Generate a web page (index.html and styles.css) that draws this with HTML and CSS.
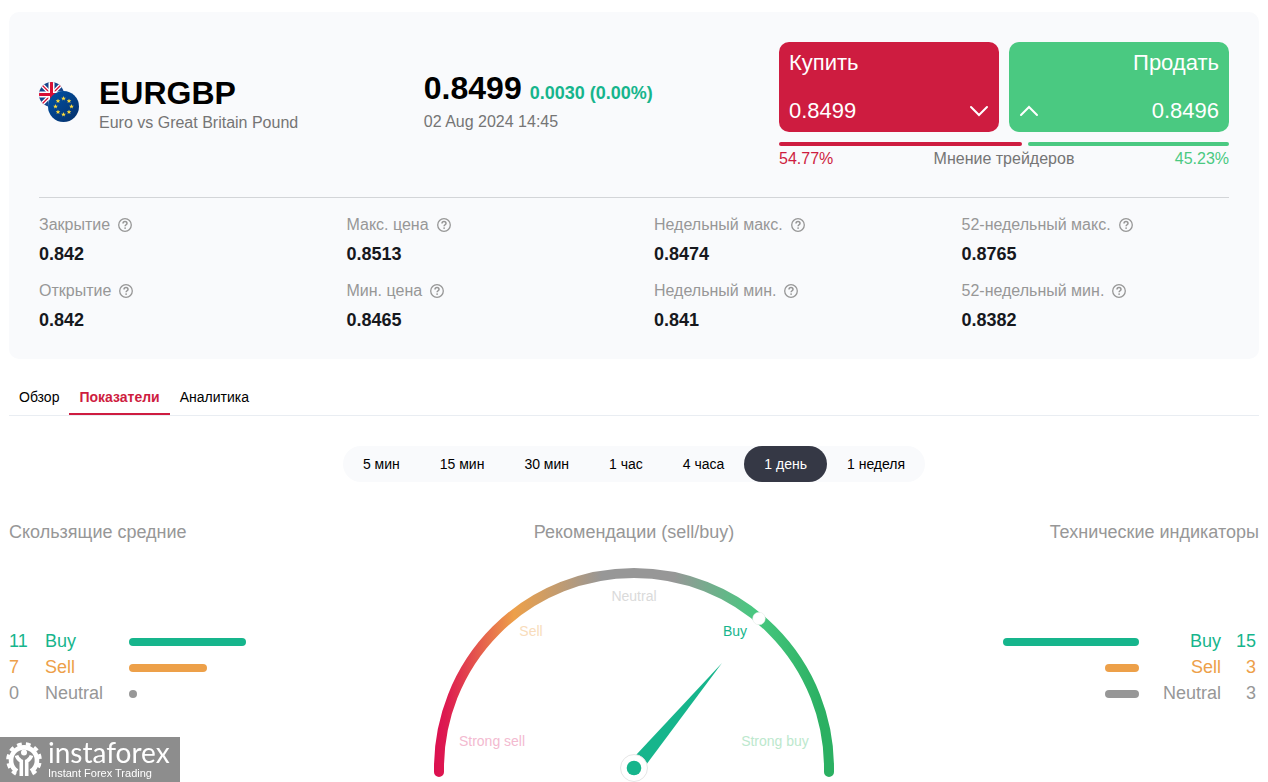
FILE: index.html
```html
<!DOCTYPE html>
<html lang="ru">
<head>
<meta charset="utf-8">
<meta name="viewport" content="width=device-width, initial-scale=1">
<title>EURGBP</title>
<link rel="stylesheet" href="styles.css">
</head>
<body>
<svg class="defs" aria-hidden="true">
  <symbol id="help" viewBox="0 0 14 14">
    <circle cx="7" cy="7" r="6.3" fill="none" stroke="currentColor" stroke-width="1.3"/>
    <path d="M5 5.6C5 4.3 5.8 3.6 7 3.6s2 .7 2 1.8c0 1.3-1.9 1.5-1.9 2.9" fill="none" stroke="currentColor" stroke-width="1.5"/>
    <circle cx="7.1" cy="10.1" r=".9" fill="currentColor"/>
  </symbol>
  <symbol id="star" viewBox="-2 -2 4 4">
    <path d="M0-2 .5-.6 1.9-.6.8.3 1.2 1.6 0 .8-1.2 1.6-.8.3-1.9-.6-.5-.6z" fill="#ffdc3c"/>
  </symbol>
</svg>
<main class="page">
  <section class="card">
    <header class="summary">
      <div class="pair">
        <svg class="flags" viewBox="0 0 40 40" aria-hidden="true">
          <defs>
            <clipPath id="gb"><circle cx="12.5" cy="12.5" r="12.5"/></clipPath>
            <linearGradient id="eu" x1="0" y1="0" x2="1" y2="1"><stop offset="0" stop-color="#0053a8"/><stop offset="1" stop-color="#062f68"/></linearGradient>
          </defs>
          <g clip-path="url(#gb)">
            <path fill="#16458c" d="M0 0h25v25H0z"/>
            <path d="M1 1l23 23M24 1L1 24" stroke="#fff" stroke-width="4"/>
            <path d="M1 1l23 23M24 1L1 24" stroke="#d80f35" stroke-width="1.3"/>
            <path d="M12.5 0v25M0 12.5h25" stroke="#fff" stroke-width="6"/>
            <path d="M12.5 0v25M0 12.5h25" stroke="#d80f35" stroke-width="3"/>
          </g>
          <circle cx="24.5" cy="24.5" r="15.5" fill="url(#eu)"/>
          <use href="#star" x="22" y="14" width="5" height="5"/>
          <use href="#star" x="27.500" y="16.500" width="5" height="5"/>
          <use href="#star" x="30" y="22" width="5" height="5"/>
          <use href="#star" x="27.500" y="27.500" width="5" height="5"/>
          <use href="#star" x="22" y="30" width="5" height="5"/>
          <use href="#star" x="16.500" y="27.500" width="5" height="5"/>
          <use href="#star" x="14" y="22" width="5" height="5"/>
          <use href="#star" x="16.500" y="16.500" width="5" height="5"/>
        </svg>
        <div>
          <h1 class="pair-name">EURGBP</h1>
          <p class="note">Euro vs Great Britain Pound</p>
        </div>
      </div>
      <div class="quote">
        <p class="quote-row"><strong class="price">0.8499</strong><strong class="change">0.0030 (0.00%)</strong></p>
        <p class="note">02 Aug 2024 14:45</p>
      </div>
      <div class="trade">
        <div class="trade-buttons">
          <button class="deal deal-buy" type="button">
            <span>Купить</span>
            <span class="deal-row"><span>0.8499</span>
              <svg class="chevron" viewBox="0 0 20 12" aria-hidden="true"><path d="M2 2l8 8 8-8"/></svg></span>
          </button>
          <button class="deal deal-sell" type="button">
            <span>Продать</span>
            <span class="deal-row"><svg class="chevron" viewBox="0 0 20 12" aria-hidden="true"><path d="M2 10l8-8 8 8"/></svg>
              <span>0.8496</span></span>
          </button>
        </div>
        <div class="opinion">
          <span class="share share-buy" style="flex-grow:54.77"></span>
          <span class="share share-sell" style="flex-grow:45.23"></span>
        </div>
        <div class="opinion-text">
          <span class="red">54.77%</span><span>Мнение трейдеров</span><span class="green">45.23%</span>
        </div>
      </div>
    </header>
    <dl class="stats">
      <div><dt>Закрытие <svg class="help"><use href="#help"/></svg></dt><dd>0.842</dd></div>
      <div><dt>Макс. цена <svg class="help"><use href="#help"/></svg></dt><dd>0.8513</dd></div>
      <div><dt>Недельный макс. <svg class="help"><use href="#help"/></svg></dt><dd>0.8474</dd></div>
      <div><dt>52-недельный макс. <svg class="help"><use href="#help"/></svg></dt><dd>0.8765</dd></div>
      <div><dt>Открытие <svg class="help"><use href="#help"/></svg></dt><dd>0.842</dd></div>
      <div><dt>Мин. цена <svg class="help"><use href="#help"/></svg></dt><dd>0.8465</dd></div>
      <div><dt>Недельный мин. <svg class="help"><use href="#help"/></svg></dt><dd>0.841</dd></div>
      <div><dt>52-недельный мин. <svg class="help"><use href="#help"/></svg></dt><dd>0.8382</dd></div>
    </dl>
  </section>

  <nav class="tabs">
    <a class="tab" href="#overview">Обзор</a>
    <a class="tab tab-active" href="#indicators" aria-current="page">Показатели</a>
    <a class="tab" href="#analytics">Аналитика</a>
  </nav>

  <div class="periods">
    <button class="period" type="button">5 мин</button>
    <button class="period" type="button">15 мин</button>
    <button class="period" type="button">30 мин</button>
    <button class="period" type="button">1 час</button>
    <button class="period" type="button">4 часа</button>
    <button class="period period-active" type="button" aria-pressed="true">1 день</button>
    <button class="period" type="button">1 неделя</button>
  </div>

  <div class="signals">
    <section>
      <h2 class="heading">Скользящие средние</h2>
      <ul class="counts">
        <li class="buy"><span>11</span><span>Buy</span><span class="bar" style="width:117px"></span></li>
        <li class="sell"><span>7</span><span>Sell</span><span class="bar" style="width:78px"></span></li>
        <li class="neutral"><span>0</span><span>Neutral</span><span class="bar" style="width:8px"></span></li>
      </ul>
    </section>
    <section class="gauge-panel">
      <h2 class="heading">Рекомендации (sell/buy)</h2>
      <svg class="gauge" viewBox="0 0 400 214" role="img" aria-label="Buy">
        <defs>
          <linearGradient id="scale" gradientUnits="userSpaceOnUse" x1="0" y1="0" x2="400" y2="0">
            <stop offset="0" stop-color="#dc0f50"/>
            <stop offset=".03" stop-color="#dd1a50"/>
            <stop offset=".2" stop-color="#eda049"/>
            <stop offset=".42" stop-color="#979797"/>
            <stop offset=".6" stop-color="#979797"/>
            <stop offset=".8" stop-color="#48c880"/>
            <stop offset=".97" stop-color="#2bb062"/>
            <stop offset="1" stop-color="#2bb062"/>
          </linearGradient>
        </defs>
        <path d="M5 204v-4a195 195 0 0 1 390 0v4" fill="none" stroke="url(#scale)" stroke-width="10" stroke-linecap="round"/>
        <circle cx="325" cy="50.500" r="6.300" fill="#fff" stroke="#dfe8e3" stroke-width=".5"/>
        <g class="gauge-text">
          <text x="58" y="178" text-anchor="middle" fill="#f3bad0">Strong sell</text>
          <text x="97" y="68" text-anchor="middle" fill="#f8dcbb">Sell</text>
          <text x="200" y="33" text-anchor="middle" fill="#dadada">Neutral</text>
          <text x="301" y="68" text-anchor="middle" fill="#16b58c">Buy</text>
          <text x="341" y="178" text-anchor="middle" fill="#bce8cd">Strong buy</text>
        </g>
        <path d="M288 95L202 187l10 10z" fill="#16b58c"/>
        <circle cx="200" cy="200" r="13.500" fill="#fff" stroke="#e6e6e6"/>
        <circle cx="200" cy="200" r="7.300" fill="#16b58c"/>
      </svg>
    </section>
    <section class="technical">
      <h2 class="heading">Технические индикаторы</h2>
      <ul class="counts counts-right">
        <li class="buy"><span class="bar" style="width:136px"></span><span>Buy</span><span>15</span></li>
        <li class="sell"><span class="bar" style="width:34px"></span><span>Sell</span><span>3</span></li>
        <li class="neutral"><span class="bar" style="width:34px"></span><span>Neutral</span><span>3</span></li>
      </ul>
    </section>
  </div>
</main>
<aside class="brand">
  <svg class="brand-gear" viewBox="0 0 36 36" aria-hidden="true">
    <path d="M11 29.300A13 13 0 1 1 25 29.300" fill="none" stroke="#fff" stroke-width="4.600"/>
    <path d="M10 32.100A16.200 16.200 0 1 1 26 32.100" fill="none" stroke="#fff" stroke-width="3.200" stroke-dasharray="4.800 4"/>
    <circle cx="18" cy="10.500" r="3" fill="#fff"/>
    <path d="M10.500 13.500c.8 3.300 2.500 4.200 4.800 5.600V34M25.500 13.500c-.8 3.300-2.500 4.200-4.800 5.600V34" fill="none" stroke="#fff" stroke-width="3.600"/>
  </svg>
  <div class="brand-text">
    <p class="brand-name">instaforex</p>
    <p class="brand-line">Instant Forex Trading</p>
  </div>
</aside>
</body>
</html>
```
FILE: styles.css
```css
* { box-sizing: border-box; }
body {
  margin: 0;
  background: #fff;
  color: #000;
  font: 16px/24px "Liberation Sans", Arial, sans-serif;
}
h1, h2, p, dl, dd, ul { margin: 0; padding: 0; }
ul { list-style: none; }
button { border: 0; font-family: inherit; cursor: pointer; }
.defs { position: absolute; width: 0; height: 0; }
.page { padding: 12px 9px 0; }

.card {
  padding: 30px 30px 27px;
  border-radius: 10px;
  background: #f9fafc;
}
.summary {
  display: grid;
  grid-template-columns: 13fr 12fr 450px;
  padding-bottom: 26px;
  border-bottom: 1px solid #d3d5d8;
}
.pair { display: flex; align-items: flex-start; gap: 20px; padding-top: 33px; }
.flags { width: 40px; height: 40px; margin-top: 7px; }
.pair-name { font-size: 32px; line-height: 36px; }
.note { color: #757575; }
.quote { padding-top: 28px; }
.quote-row { display: flex; align-items: baseline; gap: 8px; }
.price { font-size: 32px; line-height: 36px; }
.change { font-size: 18px; line-height: 24px; color: #16b58c; }
.quote .note { margin-top: 4px; }

.trade-buttons { display: grid; grid-template-columns: 1fr 1fr; gap: 10px; }
.deal {
  display: flex;
  flex-direction: column;
  justify-content: space-between;
  height: 90px;
  padding: 8px 10px;
  border-radius: 10px;
  color: #fff;
  font-size: 22px;
  line-height: 26px;
}
.deal-buy { background: #ce1c40; text-align: left; }
.deal-sell { background: #4ac981; align-items: flex-end; }
.deal-row { display: flex; justify-content: space-between; align-items: center; width: 100%; }
.chevron { width: 20px; height: 12px; fill: none; stroke: #fff; stroke-width: 2; stroke-linecap: round; }
.opinion { display: flex; gap: 6px; margin-top: 10px; }
.share { flex: 1 1 0; height: 4px; border-radius: 2px; }
.share-buy { background: #ce1c40; }
.share-sell { background: #4ac981; }
.opinion-text { display: flex; justify-content: space-between; margin-top: 1px; color: #757575; }
.red { color: #ce1c40; }
.green { color: #4ac981; }

.stats {
  display: grid;
  grid-template-columns: repeat(4, 1fr);
  gap: 13px 40px;
  padding-top: 15px;
}
.stats dt { display: flex; align-items: center; gap: 8px; color: #979797; }
.stats dd { margin-top: 5px; font-size: 18px; font-weight: bold; color: #16181d; }
.help { width: 14px; height: 14px; }

.tabs { display: flex; margin-top: 22px; border-bottom: 1px solid #e9edf2; }
.tab {
  padding: 4px 10px;
  border-bottom: 2px solid transparent;
  color: #000;
  font-size: 14px;
  text-decoration: none;
}
.tab-active { border-color: #ce1c40; color: #ce1c40; font-weight: bold; }

.periods {
  display: flex;
  width: fit-content;
  margin: 30px auto 0;
  border-radius: 18px;
  background: #f9fafc;
}
.period {
  padding: 0 20px;
  border-radius: 18px;
  background: none;
  color: #000;
  font-size: 14px;
  line-height: 36px;
}
.period-active { background: #353845; color: #fff; }

.signals { display: grid; grid-template-columns: 1fr 400px 1fr; margin-top: 38px; }
.heading { color: #979797; font-size: 18px; font-weight: normal; }
.gauge-panel { text-align: center; }
.technical { text-align: right; }
.gauge { display: block; width: 100%; margin-top: 24px; }
.gauge-text { font-size: 14px; }
.counts { margin-top: 84px; font-size: 18px; line-height: 26px; }
.counts li { display: grid; grid-template-columns: 36px 84px 1fr; align-items: center; }
.counts-right { padding-right: 3px; }
.counts-right li { grid-template-columns: 1fr 82px 35px; }
.counts-right .bar { justify-self: end; }
.bar { height: 8px; margin-top: 2px; border-radius: 4px; background: currentColor; }
.buy { color: #16b58c; }
.sell { color: #eda049; }
.neutral { color: #979797; }

.brand {
  position: fixed;
  left: 0;
  bottom: 0;
  display: flex;
  align-items: center;
  gap: 6px;
  width: 180px;
  height: 45px;
  padding-left: 6px;
  background: #8d8d8d;
  color: #fff;
}
.brand-gear { width: 36px; height: 36px; }
.brand-text { padding-bottom: 3px; }
.brand-name { font: 28px/30px Lato, sans-serif; }
.brand-line { font-size: 11px; line-height: 12px; }
```
